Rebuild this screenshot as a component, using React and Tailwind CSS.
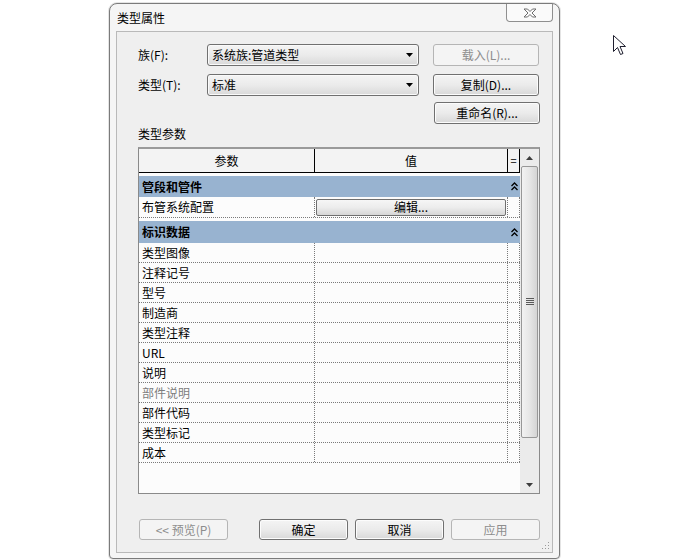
import React from "react";

function Btn({ children, disabled, w = "w-[106px]", h = "h-[22px]" }) {
  return (
    <div
      className={
        "flex items-center justify-center rounded-[3px] border text-[12px] leading-none " +
        w +
        " " +
        h +
        " " +
        (disabled
          ? "border-[#b5b5b5] bg-[#f4f4f4] text-[#8d8d8d]"
          : "border-[#707070] bg-linear-to-b from-[#f4f4f4] via-[#ebebeb] to-[#d8d8d8] text-black shadow-[inset_0_0_0_1px_#fcfcfc]")
      }
    >
      {children}
    </div>
  );
}

function Select({ value }) {
  return (
    <div className="flex h-[22px] w-[212px] items-center justify-between rounded-[3px] border border-[#707070] bg-linear-to-b from-[#f4f4f4] via-[#ebebeb] to-[#d9d9d9] pl-[4px] pr-[5px] text-[12px] shadow-[inset_0_0_0_1px_#fafafa]">
      <span>{value}</span>
      <svg width="7" height="4" viewBox="0 0 7 4">
        <path d="M0 0H7L3.5 4Z" fill="#000" />
      </svg>
    </div>
  );
}

function Chevrons() {
  return (
    <svg width="7" height="9" viewBox="0 0 7 9">
      <path d="M0.5 4L3.5 1L6.5 4" stroke="#000" strokeWidth="1.3" fill="none" />
      <path d="M0.5 8L3.5 5L6.5 8" stroke="#000" strokeWidth="1.3" fill="none" />
    </svg>
  );
}

function Group({ title, h }) {
  return (
    <div className={"flex items-center bg-[#98b3d0] text-[12px] font-bold " + h}>
      <div className="w-[369px] pl-[3px]">{title}</div>
      <div className="flex w-[12px] justify-center">
        <Chevrons />
      </div>
    </div>
  );
}

function Row({ label, gray, children, h = "h-[20px]" }) {
  return (
    <div className={"flex border-b border-dotted border-[#7a7a7a] text-[12px] " + h}>
      <div
        className={
          "flex w-[176px] items-center border-r border-dotted border-[#7a7a7a] pl-[3px] " +
          (gray ? "text-[#7d7d7d]" : "text-black")
        }
      >
        {label}
      </div>
      <div className="flex w-[193px] items-center border-r border-dotted border-[#7a7a7a]">
        {children}
      </div>
      <div className="w-[12px] border-r border-dotted border-[#7a7a7a]" />
    </div>
  );
}

const rows = [
  "类型图像",
  "注释记号",
  "型号",
  "制造商",
  "类型注释",
  "URL",
  "说明",
  "部件说明",
  "部件代码",
  "类型标记",
  "成本",
];

export default function App() {
  return (
    <div className="relative h-[560px] w-[674px] overflow-hidden bg-white font-['Noto_Sans_CJK_SC',sans-serif] text-black">
      {/* window */}
      <div className="relative ml-[109px] mt-[3px] flex h-[556px] w-[451px] flex-col rounded-t-[8px] rounded-b-[4px] border border-[#7b7b7b] bg-[#f5f5f5] px-[6px] pb-[5px] shadow-[0_0_0_1px_#e4e4e4]">
        <div className="flex h-[27px] items-center pl-[1px] text-[12px]">类型属性</div>
        <div className="absolute right-[6px] top-0 flex h-[18px] w-[47px] items-center justify-center rounded-b-[4px] border border-t-0 border-[#8f8f8f] bg-[#fafafa]">
          <svg width="14" height="10" viewBox="0 0 14 10">
            <path
              d="M1 1H4.5L7 3.5L9.5 1H13L9 5L13 9H9.5L7 6.5L4.5 9H1L5 5Z"
              fill="#fcfcfc"
              stroke="#6c6c6c"
              strokeWidth="1"
              strokeLinejoin="round"
            />
          </svg>
        </div>

        {/* client area */}
        <div className="relative flex h-[522px] w-[437px] flex-col border border-[#b9b9b9] bg-[#efefef] pl-[21px] pt-[12px]">
          <div className="flex h-[22px] items-center">
            <div className="w-[69px] text-[12px]">族(F):</div>
            <Select value="系统族:管道类型" />
            <div className="ml-[14px]">
              <Btn disabled>载入(L)...</Btn>
            </div>
          </div>
          <div className="mt-[8px] flex h-[22px] items-center">
            <div className="w-[69px] text-[12px]">类型(T):</div>
            <Select value="标准" />
            <div className="ml-[14px]">
              <Btn>复制(D)...</Btn>
            </div>
          </div>
          <div className="mt-[6px] flex justify-end pr-[12px]">
            <Btn>重命名(R)...</Btn>
          </div>
          <div className="mt-[2px] h-[16px] text-[12px] leading-[16px]">类型参数</div>

          {/* table */}
          <div className="mt-[5px] flex h-[347px] w-[402px] border border-t-2 border-[#8a8a8a] border-t-[#9a9a9a] bg-[#fcfcfc]">
            <div className="flex w-[381px] flex-col">
              <div className="flex h-[24px] border-b border-black bg-[#f3f3f3] text-[12px]">
                <div className="flex w-[176px] items-center justify-center border-r border-black">参数</div>
                <div className="flex w-[193px] items-center justify-center border-r border-black">值</div>
                <div className="flex w-[12px] items-center justify-center border-r border-black text-[11px]">=</div>
              </div>
              <div className="mt-[3px]">
                <Group title="管段和管件" h="h-[21px]" />
              </div>
              <Row label="布管系统配置" h="h-[21px]">
                <div className="ml-[1px] flex h-[17px] w-[190px] items-center justify-center rounded-[2px] border border-[#6f6f6f] bg-linear-to-b from-[#f6f6f6] via-[#ececec] to-[#d6d6d6] text-[12px]">
                  编辑...
                </div>
              </Row>
              <div className="mt-[3px]">
                <Group title="标识数据" h="h-[22px]" />
              </div>
              {rows.map((r) => (
                <Row key={r} label={r} gray={r === "部件说明"} />
              ))}
            </div>
            {/* scrollbar */}
            <div className="flex w-[19px] flex-col bg-[#ebebeb] px-[1px]">
              <div className="flex h-[17px] items-center justify-center">
                <svg width="7" height="4" viewBox="0 0 7 4">
                  <path d="M3.5 0L7 4H0Z" fill="#3c3c3c" />
                </svg>
              </div>
              <div className="flex h-[272px] items-center justify-center rounded-[2px] border border-[#979797] bg-linear-to-r from-[#f2f2f2] via-[#e6e6e6] to-[#d4d4d4]">
                <svg width="8" height="8" viewBox="0 0 8 8">
                  <path d="M0 0.5H8M0 2.5H8M0 4.5H8M0 6.5H8" stroke="#5a5a5a" strokeWidth="1" />
                </svg>
              </div>
              <div className="flex-1" />
              <div className="flex h-[17px] items-center justify-center">
                <svg width="7" height="4" viewBox="0 0 7 4">
                  <path d="M0 0H7L3.5 4Z" fill="#3c3c3c" />
                </svg>
              </div>
            </div>
          </div>

          {/* bottom buttons */}
          <div className="mt-[25px] flex items-center pl-[1px]">
            <Btn disabled w="w-[89px]" h="h-[21px]">
              &lt;&lt; 预览(P)
            </Btn>
            <div className="ml-[31px]">
              <Btn w="w-[89px]" h="h-[21px]">确定</Btn>
            </div>
            <div className="ml-[7px]">
              <Btn w="w-[89px]" h="h-[21px]">取消</Btn>
            </div>
            <div className="ml-[7px]">
              <Btn disabled w="w-[89px]" h="h-[21px]">应用</Btn>
            </div>
          </div>

          <svg className="absolute bottom-[2px] right-[2px]" width="9" height="9" viewBox="0 0 9 9">
            <g fill="#9a9a9a">
              <rect x="7" y="1" width="1" height="1" />
              <rect x="4" y="4" width="1" height="1" />
              <rect x="7" y="4" width="1" height="1" />
              <rect x="1" y="7" width="1" height="1" />
              <rect x="4" y="7" width="1" height="1" />
              <rect x="7" y="7" width="1" height="1" />
            </g>
          </svg>
        </div>
      </div>

      {/* mouse cursor */}
      <svg className="absolute left-[613px] top-[35px]" width="14" height="21" viewBox="0 0 14 21">
        <path
          d="M0.5 0.5V16.5L4.5 12.5L7.5 19.5L10 18.5L7 11.5H12.5Z"
          fill="#fff"
          stroke="#1e1e2e"
          strokeWidth="1"
          strokeLinejoin="round"
        />
      </svg>
    </div>
  );
}
